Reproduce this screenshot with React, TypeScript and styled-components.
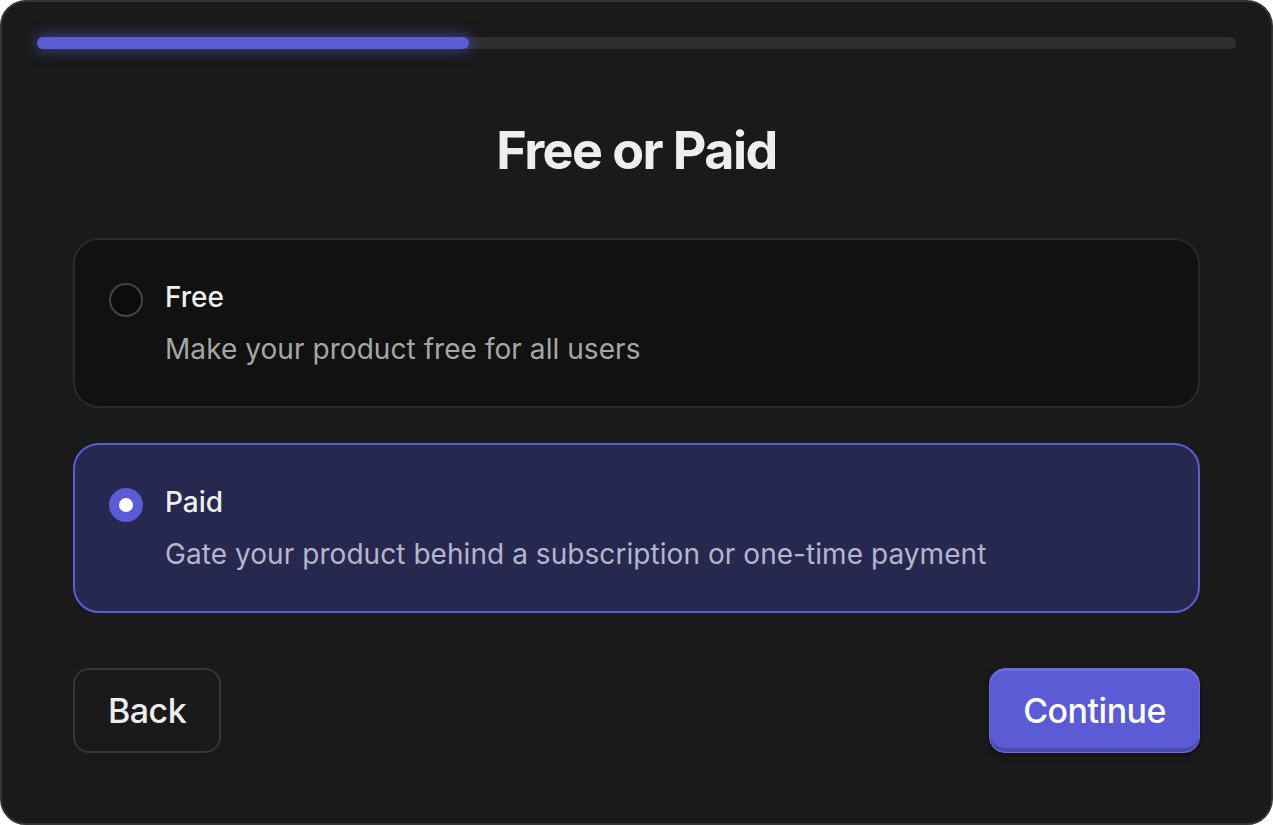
import React, { useState } from "react";
import styled, { createGlobalStyle, css } from "styled-components";

const GlobalStyle = createGlobalStyle`
  * { box-sizing: border-box; }
  html, body { margin: 0; padding: 0; background: #ffffff; }
  body { font-family: Inter, "Noto Sans", sans-serif; -webkit-font-smoothing: antialiased; }
`;

const Frame = styled.div`
  width: 1273px;
  height: 825px;
  background: #1a1a1a;
  border: 2px solid #333333;
  border-radius: 26px;
  padding: 35px 35px;
  display: flex;
  flex-direction: column;
  overflow: hidden;
`;

const Track = styled.div`
  height: 12px;
  border-radius: 6px;
  background: #2e2e2e;
`;

const Fill = styled.div`
  height: 100%;
  border-radius: 6px;
  background: #5b5bd6;
  box-shadow: 0 0 14px 2px rgba(91, 91, 214, 0.55);
`;

const Content = styled.div`
  padding: 0 36px;
  display: flex;
  flex-direction: column;
`;

const Title = styled.h1`
  margin: 70px 0 55px;
  text-align: center;
  font-size: 52px;
  line-height: 64px;
  font-weight: 700;
  letter-spacing: -0.03em;
  color: #eeeeee;
`;

const Options = styled.div`
  display: flex;
  flex-direction: column;
  gap: 35px;
`;

const Card = styled.div<{ $active: boolean }>`
  display: flex;
  align-items: flex-start;
  gap: 22px;
  padding: 40px 36px 41px 34px;
  border-radius: 26px;
  cursor: pointer;
  ${({ $active }) =>
    $active
      ? css`
          background: #262850;
          border: 2px solid #5b5bd6;
        `
      : css`
          background: #111111;
          border: 2px solid #2a2a2a;
        `}
`;

const Radio = styled.span<{ $active: boolean }>`
  flex: none;
  width: 34px;
  height: 34px;
  margin-top: 3px;
  border-radius: 50%;
  display: flex;
  align-items: center;
  justify-content: center;
  ${({ $active }) =>
    $active
      ? css`
          background: #5b5bd6;
        `
      : css`
          background: #0c0c0c;
          border: 2px solid #444444;
        `}
`;

const Dot = styled.span`
  width: 14px;
  height: 14px;
  border-radius: 50%;
  background: #ffffff;
`;

const Texts = styled.div`
  display: flex;
  flex-direction: column;
  gap: 19px;
`;

const Label = styled.div`
  font-size: 28px;
  line-height: 34px;
  font-weight: 500;
  color: #eeeeee;
`;

const Desc = styled.div<{ $active: boolean }>`
  font-size: 28px;
  line-height: 32px;
  font-weight: 400;
  color: ${({ $active }) => ($active ? "#b5b5cc" : "#a6a6a6")};
  letter-spacing: 0.002em;
`;

const Footer = styled.div`
  margin-top: 55px;
  display: flex;
  justify-content: space-between;
`;

const Button = styled.button<{ $primary?: boolean }>`
  height: 85px;
  padding: 0 33px;
  border-radius: 16px;
  font-family: Inter, "Noto Sans", sans-serif;
  font-size: 34px;
  font-weight: 500;
  letter-spacing: -0.015em;
  cursor: pointer;
  ${({ $primary }) =>
    $primary
      ? css`
          background: #5b5bd6;
          color: #ffffff;
          border: 1px solid #6a6ae0;
          box-shadow: inset 0 2px 0 rgba(255, 255, 255, 0.12),
            inset 0 -4px 0 rgba(0, 0, 0, 0.18), 0 2px 6px rgba(0, 0, 0, 0.4);
        `
      : css`
          background: #1a1a1a;
          color: #eeeeee;
          border: 2px solid #363636;
        `}
`;

const options = [
  { id: "free", label: "Free", desc: "Make your product free for all users" },
  {
    id: "paid",
    label: "Paid",
    desc: "Gate your product behind a subscription or one-time payment",
  },
];

export default function App() {
  const [selected, setSelected] = useState("paid");
  return (
    <>
      <GlobalStyle />
      <Frame>
        <Track>
          <Fill style={{ width: "36%" }} />
        </Track>
        <Content>
          <Title>Free or Paid</Title>
          <Options>
            {options.map((o) => {
              const active = o.id === selected;
              return (
                <Card key={o.id} $active={active} onClick={() => setSelected(o.id)}>
                  <Radio $active={active}>{active && <Dot />}</Radio>
                  <Texts>
                    <Label>{o.label}</Label>
                    <Desc $active={active}>{o.desc}</Desc>
                  </Texts>
                </Card>
              );
            })}
          </Options>
          <Footer>
            <Button>Back</Button>
            <Button $primary>Continue</Button>
          </Footer>
        </Content>
      </Frame>
    </>
  );
}
